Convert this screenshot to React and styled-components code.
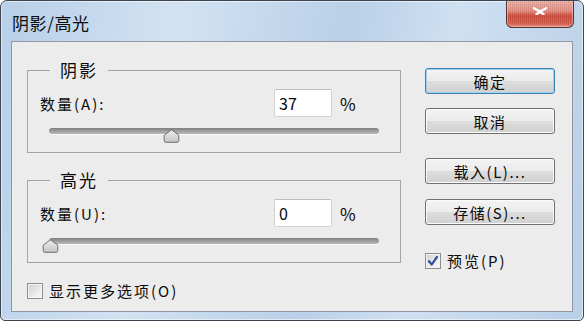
import React from "react";
import styled, { createGlobalStyle } from "styled-components";

const Global = createGlobalStyle`
  html, body { margin: 0; padding: 0; background: #ffffff; }
  * { box-sizing: border-box; }
`;

const FONT = `"Noto Sans CJK SC", "Noto Sans", sans-serif`;

const Window = styled.div`
  width: 584px;
  height: 321px;
  border: 1px solid #3d4650;
  border-radius: 7px 7px 5px 5px;
  background: linear-gradient(100deg, #b7cfe8 0%, #d2e2f2 28%, #b9d0e8 55%, #cfe0f1 72%, #b8cfe8 100%);
  box-shadow: inset 0 0 0 1px rgba(255, 255, 255, 0.55);
  display: flex;
  flex-direction: column;
  font-family: ${FONT};
  font-weight: 400;
  color: #0a0a0a;
  overflow: hidden;
`;

const TitleBar = styled.div`
  height: 40px;
  display: flex;
  justify-content: space-between;
  align-items: flex-start;
  padding: 0 9px 0 11px;
`;

const Title = styled.div`
  margin-top: 9px;
  font-size: 17px;
  line-height: 26px;
  letter-spacing: 0.6px;
  color: #0c0c0c;
`;

const CloseButton = styled.div`
  width: 68px;
  height: 28px;
  margin-top: -1px;
  border: 1px solid #4f3434;
  border-top: none;
  border-radius: 0 0 6px 6px;
  background:
    repeating-linear-gradient(90deg, rgba(255,255,255,0.08) 0 1px, rgba(0,0,0,0.04) 1px 2px),
    linear-gradient(180deg, #eab0a5 0%, #e08c7f 40%, #cf4d3c 58%, #d0594a 85%, #e38b7b 100%);
  box-shadow: inset 0 0 0 1px rgba(255, 210, 200, 0.5);
  display: flex;
  justify-content: center;
  padding-top: 7px;
`;

const Client = styled.div`
  margin: 0 10px;
  height: 271px;
  background: #ececec;
  border: 1px solid #8f98a2;
  display: flex;
  padding: 0 17px 0 15px;
  gap: 24px;
`;

const LeftCol = styled.div`
  width: 374px;
  display: flex;
  flex-direction: column;
`;

const RightCol = styled.div`
  width: 130px;
  display: flex;
  flex-direction: column;
  padding-top: 26px;
`;

const Group = styled.div`
  position: relative;
  height: 83px;
  margin-top: ${(p) => p.$top}px;
  border: 1px solid #a4a4a4;
  padding: 18px 0 0 12px;
`;

const Legend = styled.div`
  position: absolute;
  top: -11px;
  left: 22px;
  padding: 0 10px;
  background: #ececec;
  font-size: 17px;
  line-height: 20px;
  letter-spacing: 2px;
`;

const Row = styled.div`
  display: flex;
  align-items: center;
  height: 28px;
`;

const Label = styled.div`
  width: 234px;
  font-size: 15px;
  letter-spacing: 2px;
`;

const NumberBox = styled.div`
  width: 58px;
  height: 28px;
  background: #ffffff;
  border: 1px solid #d2d2d2;
  border-top-color: #bdbdbd;
  border-radius: 2px;
  font-size: 16px;
  line-height: 26px;
  padding-left: 4px;
`;

const Percent = styled.div`
  margin-left: 8px;
  font-size: 17px;
`;

const SliderWrap = styled.div`
  position: relative;
  width: 330px;
  height: 14px;
  margin: 7px 0 0 9px;
  display: flex;
  align-items: center;
`;

const Track = styled.div`
  width: 100%;
  height: 6px;
  border-radius: 3px;
  background: linear-gradient(180deg, #7f7f7f 0%, #9e9e9e 50%, #b9b9b9 100%);
  box-shadow: 0 1px 0 rgba(255, 255, 255, 0.7);
`;

const ThumbHolder = styled.div`
  position: absolute;
  top: 0;
  width: 17px;
  height: 14px;
`;

const CheckRow = styled.div`
  display: flex;
  align-items: center;
  gap: 6px;
  margin-top: ${(p) => p.$top}px;
  font-size: 15px;
  letter-spacing: 2px;
`;

const Box = styled.div`
  width: 16px;
  height: 16px;
  border: 1px solid #8e8f8f;
  background: linear-gradient(135deg, #cfcfcf 0%, #e9e9e9 55%, #fbfbfb 100%);
  box-shadow: inset 0 0 0 1px #f4f4f4;
  display: flex;
  align-items: center;
  justify-content: center;
`;

const Button = styled.div`
  height: 26px;
  margin-top: ${(p) => p.$top}px;
  border: 1px solid ${(p) => (p.$default ? "#3c7fb1" : "#707070")};
  border-radius: 3px;
  background: linear-gradient(180deg, #f4f4f4 0%, #ebebeb 48%, #dddddd 52%, #d0d0d0 100%);
  box-shadow: inset 0 0 0 1px ${(p) => (p.$default ? "#9fd4f0" : "#fbfbfb")};
  display: flex;
  align-items: center;
  justify-content: center;
  font-size: 15px;
  letter-spacing: 1.5px;
  color: #0a0a0a;
`;

const BottomFrame = styled.div`
  flex: 1;
`;

function Thumb({ value }) {
  return (
    <ThumbHolder style={{ left: `${value * 327 + 1.5 - 8.5}px` }}>
      <svg width="17" height="14" viewBox="0 0 17 14">
        <defs>
          <linearGradient id="tg" x1="0" y1="0" x2="0" y2="1">
            <stop offset="0" stopColor="#f0f0f0" />
            <stop offset="1" stopColor="#c4c4c4" />
          </linearGradient>
        </defs>
        <path
          d="M8.5 0.8 L15.8 6.2 V11.5 Q15.8 13.3 14 13.3 H3 Q1.2 13.3 1.2 11.5 V6.2 Z"
          fill="url(#tg)"
          stroke="#6f6f6f"
          strokeWidth="1"
          strokeLinejoin="round"
        />
      </svg>
    </ThumbHolder>
  );
}

function Slider({ value }) {
  return (
    <SliderWrap>
      <Track />
      <Thumb value={value} />
    </SliderWrap>
  );
}

function AmountGroup({ title, label, value, top }) {
  return (
    <Group $top={top}>
      <Legend>{title}</Legend>
      <Row>
        <Label>{label}</Label>
        <NumberBox>{value}</NumberBox>
        <Percent>%</Percent>
      </Row>
      <Slider value={value / 100} />
    </Group>
  );
}

function CheckBox({ checked }) {
  return (
    <Box>
      {checked && (
        <svg width="12" height="12" viewBox="0 0 12 12">
          <path d="M2 6.2 L4.8 9.5 L10 1.8" fill="none" stroke="#2b4f9e" strokeWidth="2.2" strokeLinecap="round" strokeLinejoin="round" />
        </svg>
      )}
    </Box>
  );
}

export default function App() {
  return (
    <>
      <Global />
      <Window>
        <TitleBar>
          <Title>阴影/高光</Title>
          <CloseButton>
            <svg width="16" height="8" viewBox="0 0 16 8">
              <path d="M2 1.2 L8 4.6 L14 1.2 M4.5 7 L8 5 L11.5 7" fill="none" stroke="#ffffff" strokeWidth="2.4" strokeLinecap="round" strokeLinejoin="round" />
            </svg>
          </CloseButton>
        </TitleBar>
        <Client>
          <LeftCol>
            <AmountGroup title="阴影" label="数量(A):" value={37} top={28} />
            <AmountGroup title="高光" label="数量(U):" value={0} top={27} />
            <CheckRow $top={17}>
              <CheckBox />
              <span>显示更多选项(O)</span>
            </CheckRow>
          </LeftCol>
          <RightCol>
            <Button $default $top={0}>确定</Button>
            <Button $top={14}>取消</Button>
            <Button $top={24}>载入(L)...</Button>
            <Button $top={15}>存储(S)...</Button>
            <CheckRow $top={25}>
              <CheckBox checked />
              <span>预览(P)</span>
            </CheckRow>
          </RightCol>
        </Client>
        <BottomFrame />
      </Window>
    </>
  );
}
